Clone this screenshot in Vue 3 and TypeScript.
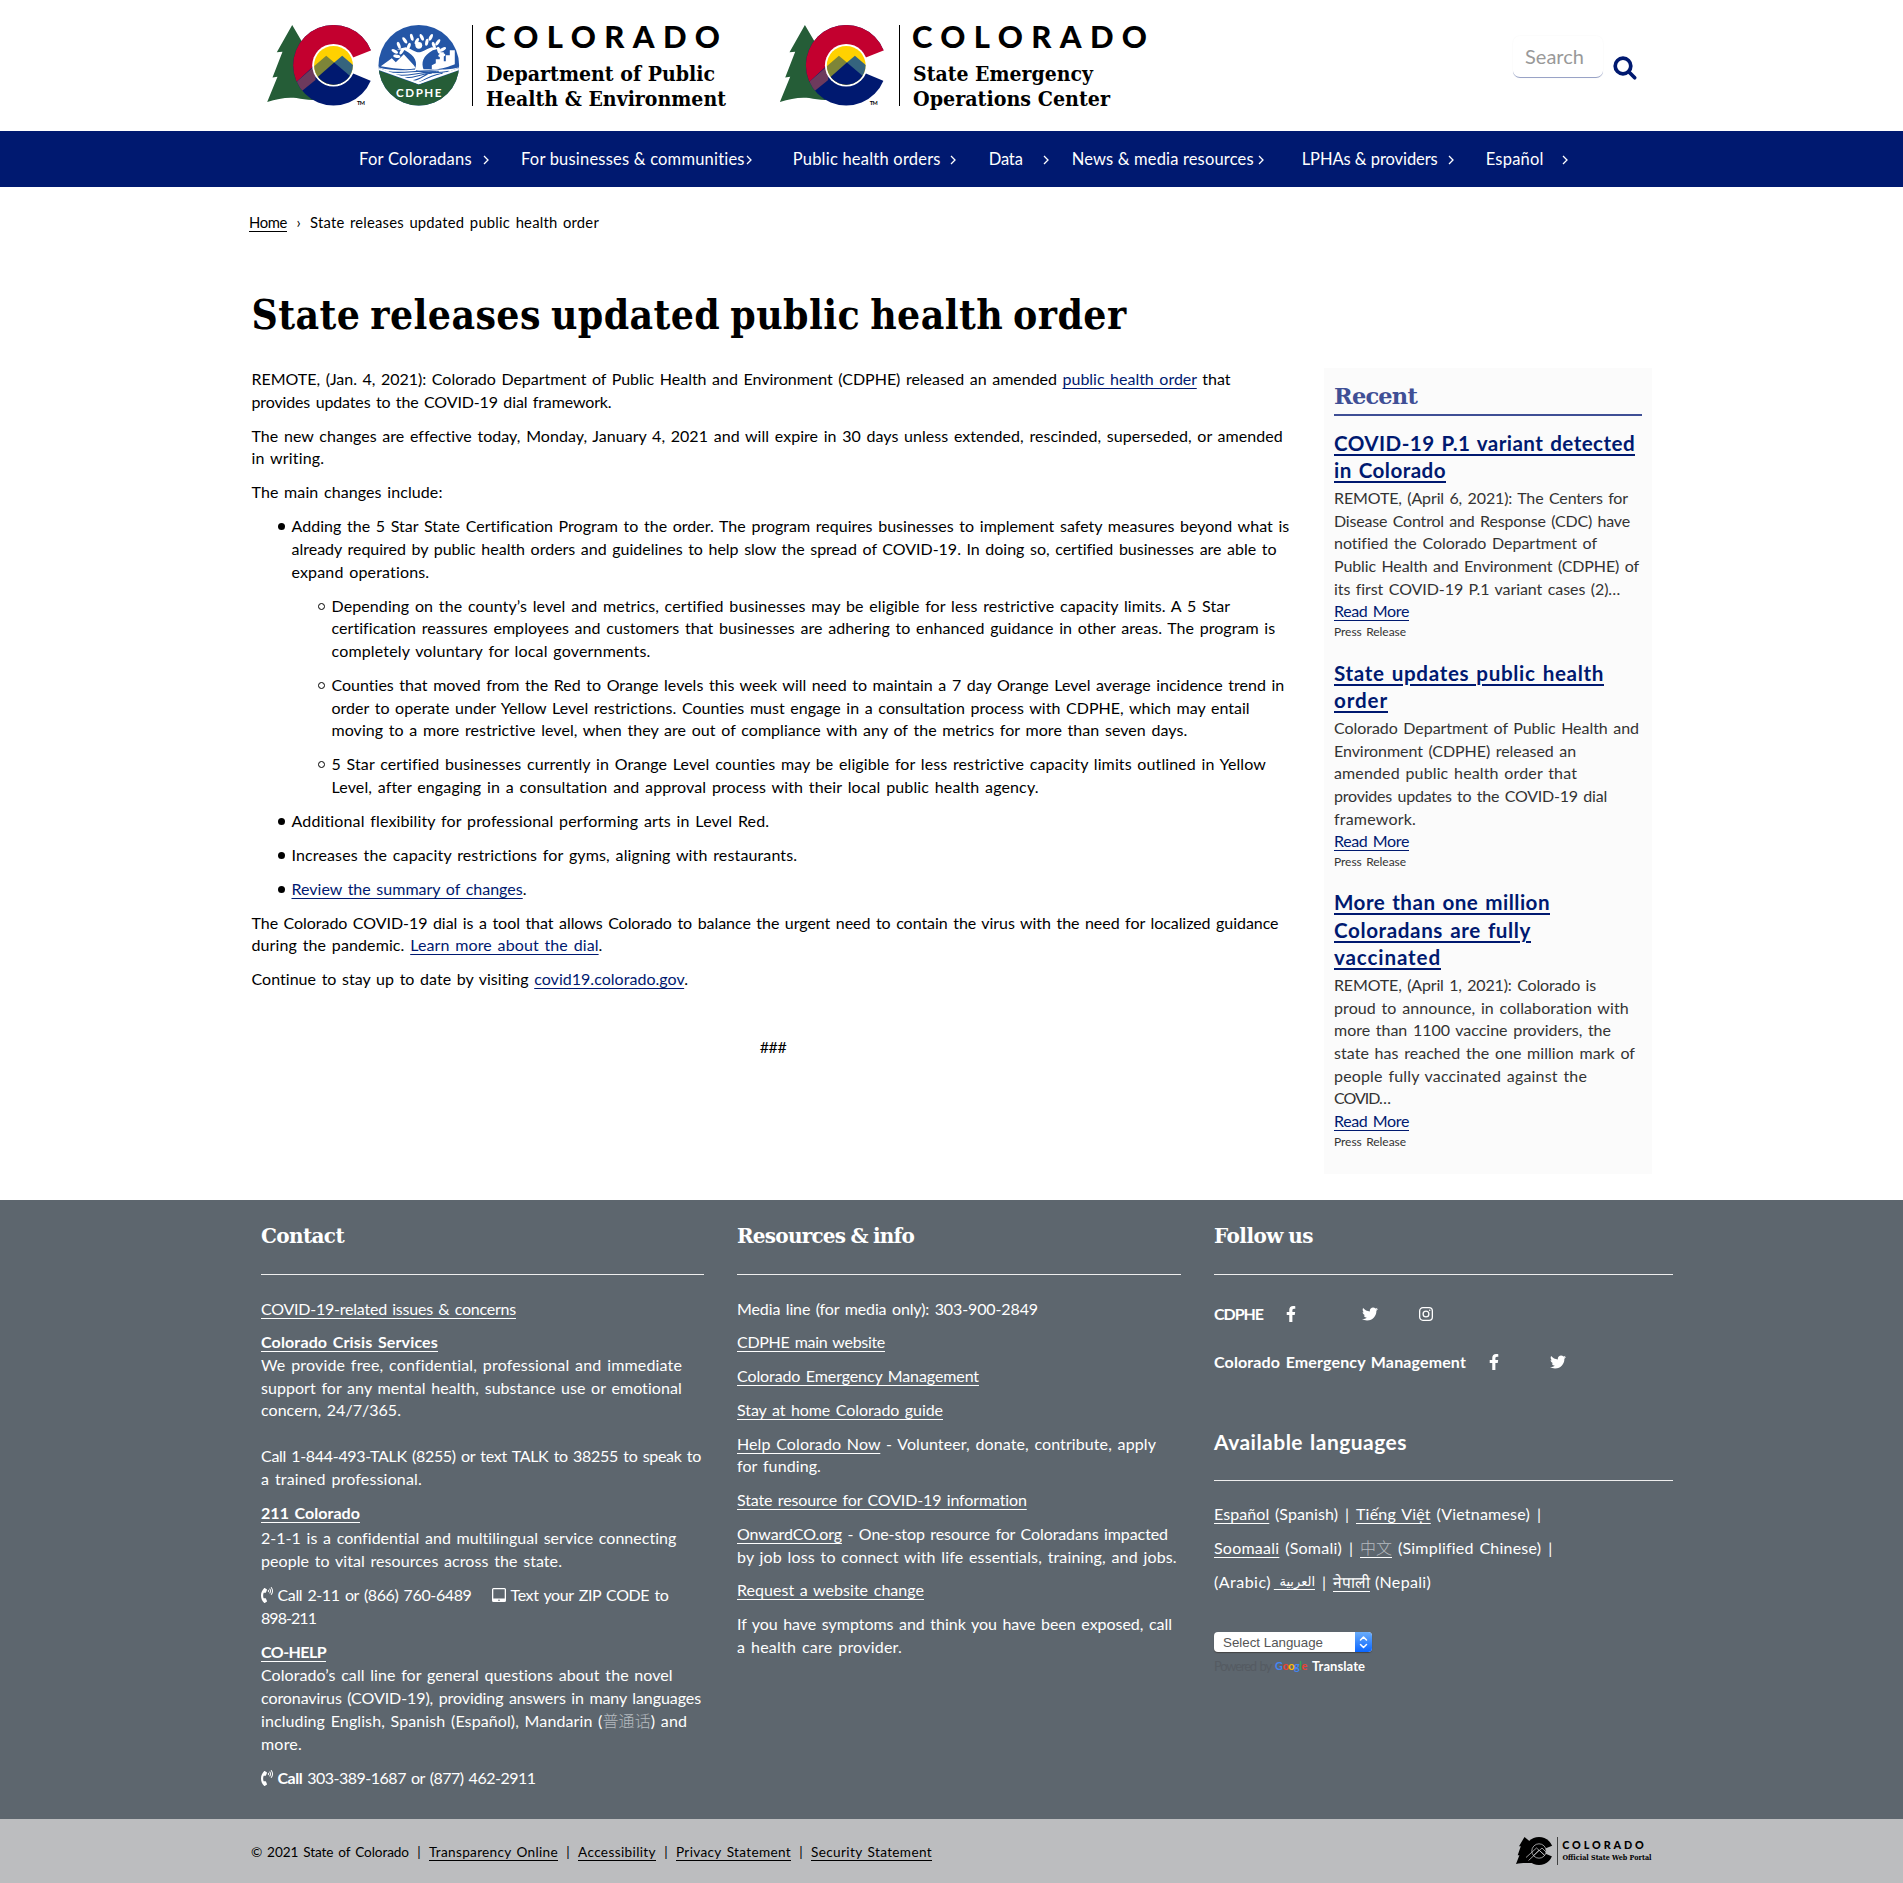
<script setup lang="ts">
import { h, type VNode } from 'vue'

interface LineProps { t: string; w: number }

// Spreads the text's tracking so that a line fills its measure exactly.
function fit(el: HTMLElement, width: number) {
  const count = (el.textContent ?? '').length
  const natural = el.getBoundingClientRect().width
  el.style.letterSpacing = `${(width - natural) / Math.max(count, 1)}px`
}

// [text] is a link, {text} is bold, <text> is set faint.
function parse(text: string) {
  return text
    .split(/(\[[^\]]+\]|\{[^}]+\}|<[^>]+>)/)
    .filter(Boolean)
    .map((part) => {
      if (part.startsWith('[')) return h('a', { href: '#' }, part.slice(1, -1))
      if (part.startsWith('{')) return h('b', part.slice(1, -1))
      if (part.startsWith('<')) return h('span', { class: 'faint' }, part.slice(1, -1))
      return part
    })
}

const Line = (props: LineProps) =>
  h('span', { class: 'line', onVnodeMounted: (v: VNode) => fit(v.el as HTMLElement, props.w) }, parse(props.t))

const nav = [
  { t: 'For Coloradans', w: 113, lead: 0, gap: 11 },
  { t: 'For businesses & communities', w: 224, lead: 32, gap: 1 },
  { t: 'Public health orders', w: 148, lead: 41, gap: 9 },
  { t: 'Data', w: 34, lead: 33, gap: 20 },
  { t: 'News & media resources', w: 182, lead: 23, gap: 4 },
  { t: 'LPHAs & providers', w: 136, lead: 38, gap: 10 },
  { t: 'Español', w: 58, lead: 32, gap: 18 },
]

const L = (t: string, w: number): LineProps => ({ t, w })

const intro = [
  [
    L('REMOTE, (Jan. 4, 2021): Colorado Department of Public Health and Environment (CDPHE) released an amended [public health order] that', 979),
    L('provides updates to the COVID-19 dial framework.', 360),
  ],
  [
    L('The new changes are effective today, Monday, January 4, 2021 and will expire in 30 days unless extended, rescinded, superseded, or amended', 1031),
    L('in writing.', 73),
  ],
  [L('The main changes include:', 191)],
]
const program = [
  L('Adding the 5 Star State Certification Program to the order. The program requires businesses to implement safety measures beyond what is', 998),
  L('already required by public health orders and guidelines to help slow the spread of COVID-19. In doing so, certified businesses are able to', 985),
  L('expand operations.', 138),
]
const nested = [
  [
    L('Depending on the county’s level and metrics, certified businesses may be eligible for less restrictive capacity limits. A 5 Star', 899),
    L('certification reassures employees and customers that businesses are adhering to enhanced guidance in other areas. The program is', 944),
    L('completely voluntary for local governments.', 319),
  ],
  [
    L('Counties that moved from the Red to Orange levels this week will need to maintain a 7 day Orange Level average incidence trend in', 953),
    L('order to operate under Yellow Level restrictions. Counties must engage in a consultation process with CDPHE, which may entail', 919),
    L('moving to a more restrictive level, when they are out of compliance with any of the metrics for more than seven days.', 856),
  ],
  [
    L('5 Star certified businesses currently in Orange Level counties may be eligible for less restrictive capacity limits outlined in Yellow', 935),
    L('Level, after engaging in a consultation and approval process with their local public health agency.', 707),
  ],
]
const changes = [
  L('Additional flexibility for professional performing arts in Level Red.', 478),
  L('Increases the capacity restrictions for gyms, aligning with restaurants.', 506),
  L('[Review the summary of changes].', 235),
]
const outro = [
  [
    L('The Colorado COVID-19 dial is a tool that allows Colorado to balance the urgent need to contain the virus with the need for localized guidance', 1027),
    L('during the pandemic. [Learn more about the dial].', 351),
  ],
  [L('Continue to stay up to date by visiting [covid19.colorado.gov].', 437)],
]

const recent = [
  {
    title: [L('[COVID-19 P.1 variant detected]', 301), L('[in Colorado]', 112)],
    body: [
      L('REMOTE, (April 6, 2021): The Centers for', 294),
      L('Disease Control and Response (CDC) have', 296),
      L('notified the Colorado Department of', 263),
      L('Public Health and Environment (CDPHE) of', 305),
      L('its first COVID-19 P.1 variant cases (2)…', 286),
    ],
  },
  {
    title: [L('[State updates public health]', 270), L('[order]', 54)],
    body: [
      L('Colorado Department of Public Health and', 305),
      L('Environment (CDPHE) released an', 242),
      L('amended public health order that', 243),
      L('provides updates to the COVID-19 dial', 273),
      L('framework.', 82),
    ],
  },
  {
    title: [L('[More than one million]', 216), L('[Coloradans are fully]', 197), L('[vaccinated]', 107)],
    body: [
      L('REMOTE, (April 1, 2021): Colorado is', 262),
      L('proud to announce, in collaboration with', 295),
      L('more than 1100 vaccine providers, the', 277),
      L('state has reached the one million mark of', 301),
      L('people fully vaccinated against the', 253),
      L('COVID…', 56),
    ],
  },
]

const resources = [
  [L('Media line (for media only): 303-900-2849', 301)],
  [L('[CDPHE main website]', 148)],
  [L('[Colorado Emergency Management]', 242)],
  [L('[Stay at home Colorado guide]', 206)],
  [L('[Help Colorado Now] - Volunteer, donate, contribute, apply', 419), L('for funding.', 84)],
  [L('[State resource for COVID-19 information]', 290)],
  [
    L('[OnwardCO.org] - One-stop resource for Coloradans impacted', 431),
    L('by job loss to connect with life essentials, training, and jobs.', 440),
  ],
  [L('[Request a website change]', 187)],
  [L('If you have symptoms and think you have been exposed, call', 435), L('a health care provider.', 165)],
]

const legal = [
  L('© 2021 State of Colorado', 158),
  L('[Transparency Online]', 129),
  L('[Accessibility]', 78),
  L('[Privacy Statement]', 115),
  L('[Security Statement]', 121),
]

const icons = {
  facebook: 'M279.14 288l14.22-92.66h-88.91v-60.13c0-25.35 12.42-50.06 52.24-50.06h40.42V6.26S260.43 0 225.36 0c-73.22 0-121.08 44.38-121.08 124.72v70.62H22.89V288h81.39v224h100.17V288z',
  twitter: 'M459.37 151.716c.325 4.548.325 9.097.325 13.645 0 138.72-105.583 298.558-298.558 298.558-59.452 0-114.68-17.219-161.137-47.106 8.447.974 16.568 1.299 25.34 1.299 49.055 0 94.213-16.568 130.274-44.832-46.132-.975-84.792-31.188-98.112-72.772 6.498.974 12.995 1.624 19.818 1.624 9.421 0 18.843-1.3 27.614-3.573-48.081-9.747-84.143-51.98-84.143-102.985v-1.299c13.969 7.797 30.214 12.67 47.431 13.319-28.264-18.843-46.781-51.005-46.781-87.391 0-19.492 5.197-37.36 14.294-52.954 51.655 63.675 129.3 105.258 216.365 109.807-1.624-7.797-2.599-15.918-2.599-24.04 0-57.828 46.782-104.934 104.934-104.934 30.213 0 57.502 12.67 76.67 33.137 23.715-4.548 46.456-13.32 66.599-25.34-7.798 24.366-24.366 44.833-46.132 57.827 21.117-2.273 41.584-8.122 60.426-16.243-14.292 20.791-32.161 39.308-52.628 54.253z',
  phone: 'M97.333 506.966c-129.874-129.874-129.681-340.252 0-469.933 5.698-5.698 14.527-6.632 21.263-2.422l64.817 40.513a17.187 17.187 0 0 1 6.849 20.958l-32.408 81.021a17.188 17.188 0 0 1-17.669 10.719l-55.81-5.58c-21.051 58.261-20.612 122.471 0 179.515l55.811-5.581a17.188 17.188 0 0 1 17.669 10.719l32.408 81.022a17.188 17.188 0 0 1-6.849 20.958l-64.817 40.513a17.19 17.19 0 0 1-21.264-2.422zM247.126 95.473c11.832 20.047 11.832 45.008 0 65.055-3.95 6.693-13.108 7.959-18.718 2.581l-5.975-5.726c-3.911-3.748-4.793-9.622-2.261-14.41a32.063 32.063 0 0 0 0-29.945c-2.533-4.788-1.65-10.662 2.261-14.41l5.975-5.726c5.61-5.378 14.768-4.112 18.718 2.581zm91.787-91.187c60.14 71.604 60.092 175.882 0 247.428-4.474 5.327-12.53 5.746-17.552.933l-5.798-5.557c-4.56-4.371-4.977-11.529-.93-16.379 49.687-59.538 49.646-145.933 0-205.422-4.047-4.85-3.631-12.008.93-16.379l5.798-5.557c5.022-4.813 13.078-4.394 17.552.933zm-45.972 44.941c36.05 46.322 36.108 111.149 0 157.546-4.39 5.641-12.697 6.251-17.856 1.304l-5.818-5.579c-4.4-4.219-4.998-11.095-1.285-15.931 26.536-34.564 26.534-82.572 0-117.134-3.713-4.836-3.115-11.711 1.285-15.931l5.818-5.579c5.159-4.947 13.466-4.337 17.856 1.304z',
}

// Leaves of the department seal's tree: x, y, rotation.
const leaves = [
  [-24, -14, -60], [-20, -20, -20], [-17, -14, 30], [-14, -25, -35], [-10, -19, 20], [-7, -28, -15], [-2, -24, 25],
  [3, -28, -25], [8, -23, 10], [12, -28, 25], [15, -20, -20], [19, -23, 35], [20, -15, -15], [24, -16, 60], [-22, -9, -80], [23, -10, 80],
]
</script>

<template>
  <div class="page">
    <svg class="defs" width="0" height="0">
      <defs>
        <clipPath id="disc"><circle r="19.4" /></clipPath>
        <clipPath id="outer"><circle r="40.3" /></clipPath>
        <g id="emblem">
          <path fill="#255d37" d="M-41.3-40.3L-56.7-13l5.7-.6L-61 12.3l5-.9-10.300 25.200C-56 33.500-46 31.500-37 32.800C-31 34-24 35-18 34.500V-20L-31.200-23Z" />
          <g clip-path="url(#outer)">
            <rect x="-41" y="-41" width="82" height="82" fill="#001970" />
            <path fill="#c3002f" d="M-42 21L-36 15.700L-19 0L45 0V-42H-42Z" />
            <path fill="#6d3a5d" d="M-36.300 16L-18 0V14.700L-31 25.300L-38 30Z" />
          </g>
          <path fill="#fff" d="M0 0L43-17.100V17.900Z" />
          <circle r="21.300" fill="#fff" />
          <g clip-path="url(#disc)">
            <rect x="-20" y="-20" width="40" height="40" fill="#ffd100" />
            <path fill="#7d8538" d="M-7.300-9.500L-20 1.500V20H0.700V-2.700Z" />
            <path fill="#35647e" d="M8.700-9.500L21 1V20H0.700V-2.700Z" />
            <path fill="#001970" d="M0.700-2.700L-24 19V24H24V17Z" />
          </g>
          <text x="23.500" y="39.500" font-size="5.500" font-family="Lato, sans-serif" font-weight="700" textLength="8">TM</text>
        </g>
      </defs>
    </svg>

    <header class="top">
      <svg class="logo dept" width="465" height="95" viewBox="262 18 465 95">
        <use href="#emblem" transform="translate(333.500 65.300)" />
        <g transform="translate(418.800 65.300)">
          <g clip-path="url(#outer)">
            <rect x="-41" y="-41" width="82" height="82" fill="#2456a6" />
            <path fill="#fff" d="M-38 1L-27-7L-23-3L-15-11L-5 0L-3 3C-14 5-26 3-38 1ZM13 0l4-2v-4h4v-7h4v9h2v-6h4v-5h5v14C31 1 20 5 13 4Z" />
            <path fill="#fff" d="M-4 5C-1-3-3-9-14-15L-22-16-13-18C-5-15-3-13 0-13S5-15 13-18L22-17 14-15C4-9 2-3 5 5Z" />
            <circle cy="-20" r="3.400" fill="#fff" />
            <ellipse v-for="(l, i) in leaves" :key="i" rx="1.600" ry="3.600" fill="#fff" :transform="`translate(${l[0]} ${l[1]}) rotate(${l[2]})`" />
            <path fill="#fff" d="M-41 2C-20 8-5 3 10 4S32 4 41 2L0 19Z" />
            <g fill="none" stroke="#2456a6" stroke-width="1.100">
              <path d="M-30 6.500C-15 9 0 4 20 6M-23 9.500C-10 12 0 6 17 7M-14 12.500C-3 13 3 8 13 8M-7 15.500C0 15 4 11 10 8M0 17.500C5 15 9 11 24 8M-3 5.500C5 7 15 9 30 6" />
            </g>
            <path fill="#255d37" d="M-42 4.500L0 19.500L42 4.500V42H-42Z" />
            <path fill="none" stroke="#fff" stroke-width="2" d="M-42 3L0 18L42 3" />
          </g>
          <text class="sans" x="-22.700" y="32" font-size="11.600" font-weight="700" fill="#fff" textLength="45.400">CDPHE</text>
        </g>
        <path stroke="#000" d="M472.500 25V106" />
        <text class="brand" x="485" y="48" textLength="235">COLORADO</text>
        <text class="slab" x="486" y="81.300" textLength="229" lengthAdjust="spacingAndGlyphs">Department of Public</text>
        <text class="slab" x="486" y="105.500" textLength="240" lengthAdjust="spacingAndGlyphs">Health &amp; Environment</text>
      </svg>
      <svg class="logo seoc" width="380" height="95" viewBox="774 18 380 95">
        <use href="#emblem" transform="translate(846.200 65.300)" />
        <path stroke="#000" d="M899.500 25V106" />
        <text class="brand" x="912" y="48" textLength="235">COLORADO</text>
        <text class="slab" x="913" y="81.300" textLength="180" lengthAdjust="spacingAndGlyphs">State Emergency</text>
        <text class="slab" x="913" y="105.500" textLength="197" lengthAdjust="spacingAndGlyphs">Operations Center</text>
      </svg>
      <form class="search" @submit.prevent>
        <div class="field"><Line t="Search" :w="59" /></div>
        <svg width="24" height="24" viewBox="0 0 24 24" fill="none" stroke="#001970" stroke-width="3.700" stroke-linecap="round">
          <circle cx="10" cy="10" r="7.800" /><path d="M16 16L21.700 21.700" />
        </svg>
      </form>
    </header>

    <nav class="nav">
      <a v-for="n in nav" :key="n.t" :style="{ marginLeft: n.lead + 'px', columnGap: n.gap + 'px' }">
        <Line :t="n.t" :w="n.w" />
        <svg width="6" height="10" viewBox="0 0 6 10" fill="none" stroke="#fff" stroke-width="1.300"><path d="M1 1L5 5L1 9" /></svg>
      </a>
    </nav>

    <div class="crumbs">
      <Line t="[Home]" :w="38" /><span class="sep">›</span><Line t="State releases updated public health order" :w="289" />
    </div>

    <h1><Line t="State releases updated public health order" :w="875" /></h1>

    <div class="columns">
      <main class="article">
        <p v-for="(p, i) in intro" :key="i"><Line v-for="l in p" :key="l.t" v-bind="l" /></p>
        <ul>
          <li>
            <Line v-for="l in program" :key="l.t" v-bind="l" />
            <ul class="inner">
              <li v-for="(p, i) in nested" :key="i"><Line v-for="l in p" :key="l.t" v-bind="l" /></li>
            </ul>
          </li>
          <li v-for="l in changes" :key="l.t"><Line v-bind="l" /></li>
        </ul>
        <p v-for="(p, i) in outro" :key="i"><Line v-for="l in p" :key="l.t" v-bind="l" /></p>
        <p class="end">###</p>
      </main>

      <aside class="recent">
        <h2><Line t="Recent" :w="83" /></h2>
        <article v-for="(r, i) in recent" :key="i">
          <h3><Line v-for="l in r.title" :key="l.t" v-bind="l" /></h3>
          <Line v-for="l in r.body" :key="l.t" v-bind="l" />
          <Line t="[Read More]" :w="75" />
          <small><Line t="Press Release" :w="72" /></small>
        </article>
      </aside>
    </div>

    <footer class="footer">
      <section class="contact">
        <h2><Line t="Contact" :w="83" /></h2>
        <div class="body">
          <p class="tight"><Line t="[COVID-19-related issues & concerns]" :w="255" /></p>
          <p>
            <b><Line t="[Colorado Crisis Services]" :w="177" /></b>
            <Line t="We provide free, confidential, professional and immediate" :w="421" />
            <Line t="support for any mental health, substance use or emotional" :w="421" />
            <Line t="concern, 24/7/365." :w="140" />
            <br />
            <Line t="Call 1-844-493-TALK (8255) or text TALK to 38255 to speak to" :w="440" />
            <Line t="a trained professional." :w="161" />
          </p>
          <p>
            <b class="lead"><Line t="[211 Colorado]" :w="99" /></b>
            <Line t="2-1-1 is a confidential and multilingual service connecting" :w="416" />
            <Line t="people to vital resources across the state." :w="301" />
          </p>
          <p>
            <span class="row">
              <svg class="phone" width="12" height="16" viewBox="0 0 384 512" fill="#fff"><path :d="icons.phone" /></svg>
              <Line t="Call 2-11 or (866) 760-6489" :w="194" />
              <svg class="tablet" width="14" height="14" viewBox="0 0 14 14"><path fill="#fff" fill-rule="evenodd" d="M1.500 0h11A1.500 1.500 0 0 1 14 1.500v11a1.500 1.500 0 0 1-1.500 1.500h-11A1.500 1.500 0 0 1 0 12.500v-11A1.500 1.500 0 0 1 1.500 0zM1.300 1.300v9.200h11.400V1.300zM7 11.500a.8.800 0 1 0 0 1.600a.8.800 0 1 0 0-1.600z" /></svg>
              <Line t="Text your ZIP CODE to" :w="158" />
            </span>
            <Line t="898-211" :w="55" />
          </p>
          <p>
            <b class="lead short"><Line t="[CO-HELP]" :w="65" /></b>
            <Line t="Colorado’s call line for general questions about the novel" :w="412" />
            <Line t="coronavirus (COVID-19), providing answers in many languages" :w="440" />
            <Line t="including English, Spanish (Español), Mandarin (<普通话>) and" :w="426" />
            <Line t="more." :w="41" />
          </p>
          <p>
            <span class="row">
              <svg class="phone" width="12" height="16" viewBox="0 0 384 512" fill="#fff"><path :d="icons.phone" /></svg>
              <Line t="{Call} 303-389-1687 or (877) 462-2911" :w="258" />
            </span>
          </p>
        </div>
      </section>

      <section class="links">
        <h2><Line t="Resources & info" :w="177" /></h2>
        <div class="body">
          <p v-for="(p, i) in resources" :key="i"><Line v-for="l in p" :key="l.t" v-bind="l" /></p>
        </div>
      </section>

      <section class="follow">
        <h2><Line t="Follow us" :w="99" /></h2>
        <div class="social">
          <Line t="{CDPHE}" :w="49" />
          <svg class="s1" width="10" height="16" viewBox="0 0 320 512" fill="#fff"><path :d="icons.facebook" /></svg>
          <svg class="s2" width="16" height="16" viewBox="0 0 512 512" fill="#fff"><path :d="icons.twitter" /></svg>
          <svg class="s3" width="14" height="14" viewBox="0 0 14 14" fill="none" stroke="#fff" stroke-width="1.300">
            <rect x=".65" y=".65" width="12.700" height="12.700" rx="3.300" /><circle cx="7" cy="7" r="2.900" /><circle cx="10.700" cy="3.300" r=".8" fill="#fff" stroke="none" />
          </svg>
        </div>
        <div class="social">
          <Line t="{Colorado Emergency Management}" :w="252" />
          <svg class="s1" width="10" height="16" viewBox="0 0 320 512" fill="#fff"><path :d="icons.facebook" /></svg>
          <svg class="s4" width="16" height="16" viewBox="0 0 512 512" fill="#fff"><path :d="icons.twitter" /></svg>
        </div>
        <h2 class="plain"><Line t="Available languages" :w="193" /></h2>
        <div class="langs">
          <p><Line t="[Español] (Spanish)" :w="124" /><span class="pipe">|</span><Line t="[Tiếng Việt] (Vietnamese)" :w="174" /><span class="pipe">|</span></p>
          <p><Line t="[Soomaali] (Somali)" :w="128" /><span class="pipe">|</span><Line class="faint" t="[中文]" :w="32" /><Line class="after" t="(Simplified Chinese)" :w="143" /><span class="pipe">|</span></p>
          <p><Line t="(Arabic)" :w="57" /><a class="arabic">العربية&nbsp;</a><span class="pipe">|</span><a class="nepali">नेपाली</a><Line class="after" t="(Nepali)" :w="56" /></p>
        </div>
        <div class="select">
          <Line t="Select Language" :w="100" />
          <span class="knob"><svg width="17" height="20" viewBox="0 0 17 20" fill="none" stroke="#fff" stroke-width="1.500" stroke-linecap="round" stroke-linejoin="round"><path d="M5.500 8L8.500 5L11.500 8M5.500 12.500L8.500 15.500L11.500 12.500" /></svg></span>
        </div>
        <div class="powered">
          <Line class="by" t="Powered by" :w="57" />
          <span class="google"><i>G</i><i>o</i><i>o</i><i>g</i><i>l</i><i>e</i></span>
          <Line t="{Translate}" :w="53" />
        </div>
      </section>
    </footer>

    <div class="bottom">
      <div class="legal">
        <template v-for="(l, i) in legal" :key="l.t"><span v-if="i" class="bar">|</span><Line v-bind="l" /></template>
      </div>
      <svg width="140" height="36" viewBox="1514 1833 140 36">
        <g transform="translate(1539 1851)">
          <path d="M-14.500-14L-20-4.700h1.800L-21.300 4.200h1.700L-23 13C-18 11.500-12 12-6 12V-7Z" />
          <circle r="14" />
          <path fill="#bcbdbf" d="M0 0L15-6V6.300Z" />
          <circle r="7.200" stroke="#bcbdbf" stroke-width=".8" />
          <path fill="none" stroke="#bcbdbf" stroke-width=".8" d="M-13 6.500L-2.500-3L5.500 4M-10.500 9.500L3-3L7 1M-6 5L0-1L6 5" />
        </g>
        <path stroke="#222" stroke-width=".8" d="M1557.500 1837V1865" />
        <text class="sans" x="1562.300" y="1849" font-size="10.800" font-weight="900" textLength="81.500">COLORADO</text>
        <text x="1562.500" y="1860.300" font-size="8" font-weight="700" font-family="'DejaVu Serif', serif" textLength="89" lengthAdjust="spacingAndGlyphs">Official State Web Portal</text>
      </svg>
    </div>
  </div>
</template>

<style>
body { margin: 0; background: #fff; }
</style>

<style scoped>
.page { width: 1903px; height: 1883px; overflow: hidden; display: flex; flex-direction: column; font: 16px/22.857px Lato, "Noto Sans CJK SC", sans-serif; word-spacing: 1.500px; color: #000; }
.page p, h1, h2, h3, ul { margin: 0; padding: 0; }
.defs { display: block; flex: none; }
.top svg, .bottom svg { overflow: visible; word-spacing: 0; }
.line { display: block; width: max-content; white-space: pre; }
.page :deep(a) { color: inherit; text-decoration: underline; text-decoration-thickness: 1px; text-underline-offset: 3px; }
.page :deep(.faint) { color: #b4babf; font-weight: 300; }
.page .faint :deep(a) { text-decoration-color: #fff; }
.sans { font-family: Lato, sans-serif; }
.brand { font: 900 31px Lato, sans-serif; }
.slab { font: 700 19.500px "DejaVu Serif", serif; }

.top { flex: none; height: 131px; display: flex; align-items: flex-start; box-sizing: border-box; padding: 18px 0 0 262px; }
.seoc { margin-left: 47px; }
.search { margin: 18px 0 0 359px; display: flex; }
.field { width: 90px; height: 42px; box-sizing: border-box; padding: 8px 0 0 12px; border-radius: 7px; border-bottom: 1px solid #99a3c6; box-shadow: 0 0 2px #f4f4f4; font-size: 20px; line-height: 25px; color: #999; }
.search svg { margin: 20px 0 0 10px; }

.nav { flex: none; height: 56px; background: #001970; display: flex; align-items: center; padding: 1px 0 0 359px; color: #fff; font-size: 16.500px; word-spacing: 0; box-sizing: border-box; }
.nav .line { color: #fff; }
.page .nav a { display: flex; align-items: center; text-decoration: none; }
.nav svg { margin-top: 1px; }

.crumbs { flex: none; display: flex; padding: 24px 0 0 249px; font-size: 14.800px; height: 24px; }
.sep { width: 23px; text-align: center; }

h1 { flex: none; padding: 55px 0 0 251.500px; height: 78px; font: 700 40.500px/50px "DejaVu Serif Condensed", "DejaVu Serif", serif; word-spacing: -3px; }
.columns { flex: none; display: flex; height: 832px; line-height: 22.660px; }
.article { width: 1043px; margin-left: 251.500px; padding-right: 29.500px; }
.article p { margin-bottom: 11.330px; }
.article :deep(a) { color: #001970; }
.article ul { list-style: none; padding-left: 40px; }
.article li { position: relative; margin-bottom: 11.330px; }
.article li::before { content: ""; position: absolute; left: -14px; top: 8px; width: 7px; height: 7px; border-radius: 50%; background: #000; }
.article .inner { padding: 11.330px 0 0 40px; }
.article .inner li::before { width: 5px; height: 5px; background: none; border: 1px solid #000; }
.article .end { text-align: center; padding-top: 34px; letter-spacing: -.5px; }

.recent { width: 308px; height: 786px; padding: 10px; background: #fbfbfb; color: #333; }
.recent h2 { height: 35.700px; border-bottom: 2px solid #3f4f95; color: #3f4f95; font: 700 22.500px/36px "DejaVu Serif", serif; margin-bottom: 14px; }
.recent h3 { font-size: 20.600px; line-height: 27.430px; margin-bottom: 2.500px; color: #001970; }
.recent :deep(a) { color: #001970; }
.recent h3 :deep(a) { text-decoration-thickness: 2px; }
.recent small { display: block; font-size: 12px; line-height: 17px; margin-bottom: 19.500px; }

.footer { flex: none; height: 619px; display: flex; background: #5d666e; color: #fff; padding-left: 261px; }
.footer section { width: 443px; margin-right: 33px; }
.footer .links { width: 444px; }
.footer .follow { width: 459px; margin-right: 0; }
.footer h2 { box-sizing: border-box; height: 75px; padding-top: 21px; border-bottom: 1px solid #eee; font: 700 20px/30px "DejaVu Serif", serif; word-spacing: -1px; }
.body { padding-top: 22.500px; }
.body p { margin-bottom: 11.200px; }
.links p { line-height: 22.660px; margin-bottom: 11.150px; }
.body .tight { margin-bottom: 10.500px; }
.body b { display: block; }
.body .lead { margin-bottom: 2px; }
.body .short { margin-bottom: .8px; }
.row { display: flex; align-items: center; }
.row :deep(b) { display: inline; }
.phone { margin-right: 4.500px; }
.tablet { margin: 0 5px 0 20px; }
.social { display: flex; align-items: center; height: 22.857px; margin-top: 27.600px; }
.social + .social { margin-top: 25.200px; }
.s1 { margin-left: 23px; }
.s2 { margin-left: 66px; }
.s3 { margin-left: 41px; }
.s4 { margin-left: 51px; }
.footer .plain { margin-top: 54px; height: 54px; padding-top: 0; font: 700 21px/30px Lato, sans-serif; word-spacing: 1.500px; }
.langs { padding-top: 21.500px; }
.langs p { display: flex; height: 22.857px; margin-bottom: 11.330px; white-space: pre; }
.pipe { width: 18px; text-align: center; }
.after { margin-left: 6px; }
.arabic { width: 39px; margin-left: 5px; direction: rtl; font-family: "DejaVu Sans", sans-serif; font-size: 13px; white-space: nowrap; }
.nepali { width: 36px; white-space: nowrap; font-size: 15.500px; }
.select { display: flex; justify-content: space-between; width: 158px; height: 20px; margin-top: 38px; background: #fff; border-radius: 4px; box-shadow: 0 1px 1px #444; color: #555; font: 13.330px/21px "Liberation Sans", sans-serif; word-spacing: 0; padding-left: 9px; box-sizing: border-box; }
.knob { width: 17px; border-radius: 0 4px 4px 0; background: linear-gradient(#6aadfb, #0a66ff); }
.knob svg { display: block; }
.powered { display: flex; margin-top: 4px; font-size: 13px; line-height: 20px; }
.by { color: #555b62; }
.google { width: 37px; margin-left: 4px; font-size: 11px; letter-spacing: -.5px; }
.google i { font-style: normal; color: #4285f4; font-weight: 700; }
.google i:nth-child(2), .google i:nth-child(6) { color: #ea4335; }
.google i:nth-child(3) { color: #fbbc05; }
.google i:nth-child(5) { color: #34a853; }

.bottom { flex: none; height: 64px; background: #bcbdbf; display: flex; align-items: center; justify-content: space-between; padding: 2px 249px 0 251px; box-sizing: border-box; font-size: 13.600px; }
.legal { display: flex; }
.bar { width: 20px; text-align: center; }
.bottom svg { margin-top: -2px; }
</style>
